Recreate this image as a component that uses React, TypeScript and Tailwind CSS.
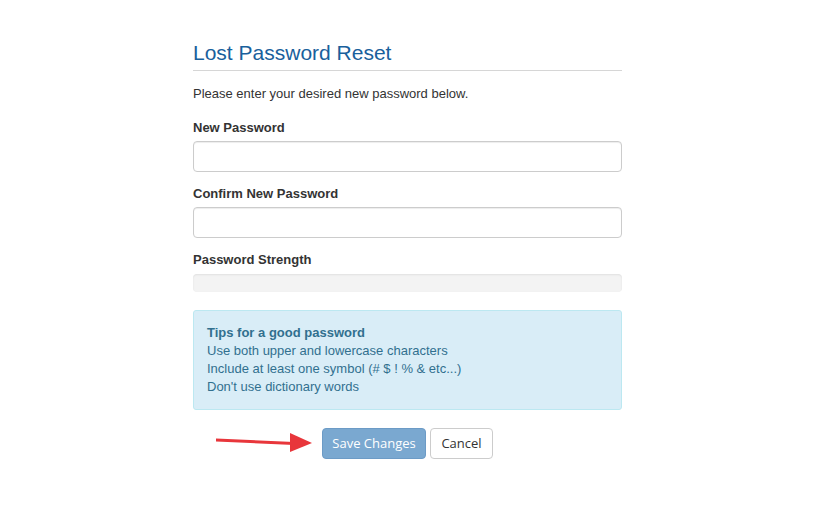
import React from 'react';

const Arrow: React.FC = () => (
  <svg width="100" height="22" viewBox="0 0 100 22" className="absolute left-[21px] top-[3px]">
    <path d="M2 7.5 L80 11 L80 14 L2 10.5 Z" fill="#e8363b" />
    <path d="M76 2 L98 12 L76 21 Z" fill="#e8363b" />
  </svg>
);

export default function App() {
  return (
    <div className="min-h-[510px] bg-white font-['Liberation_Sans',Arial,sans-serif] text-[13px] text-[#333]">
      <div className="mx-auto w-[429px] pt-[41px]">
        <h1 className="text-[21px] leading-[24px] text-[#19609c]">Lost Password Reset</h1>
        <div className="mt-[5px] h-px bg-[#d6d6d6]" />

        <p className="mt-[14px] leading-[18px]">Please enter your desired new password below.</p>

        <label className="mt-[16px] block font-bold leading-[18px]">New Password</label>
        <input
          type="password"
          className="mt-[4px] block h-[31px] w-full rounded-[4px] border border-[#ccc] bg-white px-3 shadow-[inset_0_1px_1px_rgba(0,0,0,0.075)] outline-none"
        />

        <label className="mt-[13px] block font-bold leading-[18px]">Confirm New Password</label>
        <input
          type="password"
          className="mt-[4px] block h-[31px] w-full rounded-[4px] border border-[#ccc] bg-white px-3 shadow-[inset_0_1px_1px_rgba(0,0,0,0.075)] outline-none"
        />

        <label className="mt-[13px] block font-bold leading-[18px]">Password Strength</label>
        <div className="mt-[5px] h-[18px] w-full rounded-[4px] bg-[#f3f3f3] shadow-[inset_0_1px_2px_rgba(0,0,0,0.08)]" />

        {/* Tips */}
        <div className="mt-[18px] rounded-[3px] border border-[#bce8f1] bg-[#d9edf7] px-[13px] pt-[13px] pb-[13px] leading-[18px] text-[#31708f]">
          <div className="font-bold">Tips for a good password</div>
          <div>Use both upper and lowercase characters</div>
          <div>Include at least one symbol (# $ ! % &amp; etc...)</div>
          <div>Don't use dictionary words</div>
        </div>

        <div className="relative mt-[18px] flex justify-center gap-[4px] font-['Open_Sans',sans-serif]">
          <Arrow />
          <button
            disabled
            className="h-[31px] w-[104px] rounded-[4px] border border-[#6c9bc6] bg-[#7aa8d0] text-[13px] text-white"
          >
            Save Changes
          </button>
          <button className="h-[31px] w-[63px] rounded-[4px] border border-[#ccc] bg-white text-[13px] text-[#333]">
            Cancel
          </button>
        </div>
      </div>
    </div>
  );
}
